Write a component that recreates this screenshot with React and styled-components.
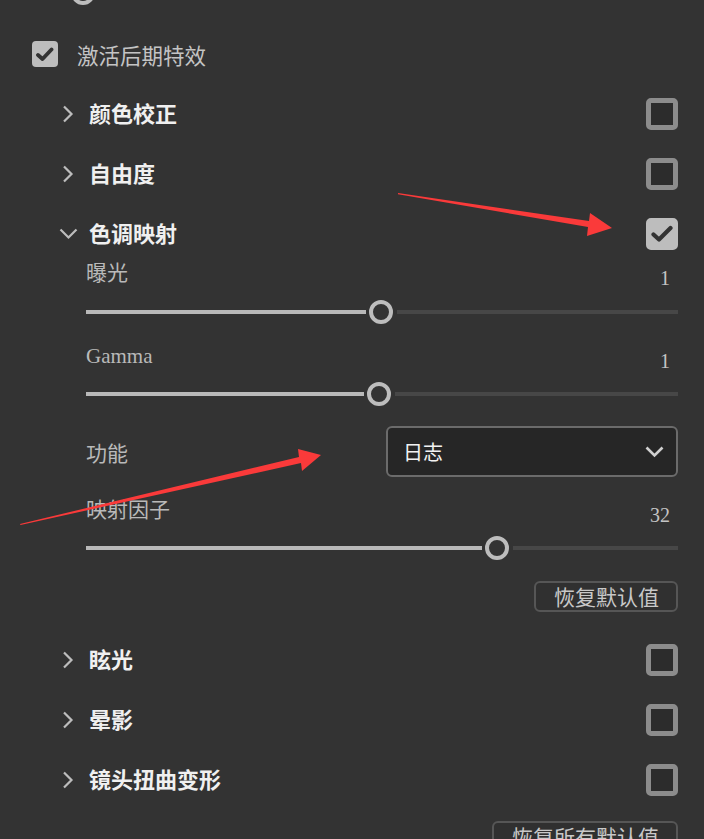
import React from 'react';
import styled, { createGlobalStyle } from 'styled-components';

const GlobalStyle = createGlobalStyle`
  html, body {
    margin: 0;
    background: #333333;
  }
  body {
    font-family: "Noto Sans CJK SC", "Noto Sans", sans-serif;
    overflow: hidden;
  }
`;

const Page = styled.div`
  position: relative;
  width: 704px;
  height: 839px;
  overflow: hidden;
  background: #333333;
`;

const TopSlider = styled.div`
  margin-top: -19px;
  padding: 0 26px 0 32px;
`;

const ActivateRow = styled.div`
  display: flex;
  align-items: center;
  gap: 19px;
  height: 60px;
  margin-top: 19px;
  padding-left: 32px;
  color: #c4c4c4;
  font-size: 21.5px;
`;

const SmallBox = styled.div`
  width: 26px;
  height: 26px;
  border-radius: 4px;
  background: #bdbdbd;
  display: flex;
  align-items: center;
  justify-content: center;
`;

const SectionRow = styled.div`
  display: flex;
  align-items: center;
  height: 60px;
  padding: 0 26px 0 ${p => (p.open ? 59 : 62)}px;
`;

const Chevron = styled.span`
  width: ${p => (p.open ? 30 : 27)}px;
  display: flex;
  align-items: center;
`;

const SectionTitle = styled.span`
  flex: 1;
  color: #f0f0f0;
  font-size: 22px;
  font-weight: 700;
  line-height: 26px;
  padding-bottom: 4px;
`;

const Box = styled.div`
  width: 32px;
  height: 32px;
  box-sizing: border-box;
  border-radius: 5px;
  border: 5px solid ${p => (p.checked ? '#bdbdbd' : '#8c8c8c')};
  background: ${p => (p.checked ? '#bdbdbd' : '#2c2c2c')};
  display: flex;
  align-items: center;
  justify-content: center;
`;

const SubPanel = styled.div`
  padding: 0 26px 0 86px;
  display: flex;
  flex-direction: column;
`;

const LabelRow = styled.div`
  display: flex;
  justify-content: space-between;
  align-items: flex-start;
  height: 24px;
  line-height: 24px;
  margin-top: ${p => p.mt}px;
`;

const Label = styled.span`
  color: #b9b9b9;
  font-size: 21px;
  font-family: "Liberation Serif", "Noto Sans CJK SC", serif;
`;

const Value = styled.span`
  color: #c4c4c4;
  font-size: 20px;
  font-family: "Liberation Serif", serif;
  margin-top: 5px;
  margin-right: 8px;
`;

const Track = styled.div`
  display: flex;
  align-items: center;
  height: 24px;
  margin-top: ${p => p.mt || 0}px;
`;

const ActiveBar = styled.div`
  height: 4px;
  background: #b9b9b9;
  flex: none;
`;

const InactiveBar = styled.div`
  height: 4px;
  flex: 1;
  background: #474747;
`;

const Thumb = styled.div`
  flex: none;
  width: 24px;
  height: 24px;
  box-sizing: border-box;
  border-radius: 50%;
  border: 4px solid #bdbdbd;
  margin: 0 4px 0 3px;
`;

const SelectRow = styled.div`
  display: flex;
  align-items: center;
  justify-content: space-between;
  margin-top: 20px;
`;

const Select = styled.div`
  width: 292px;
  height: 51px;
  box-sizing: border-box;
  border: 2px solid #6b6b6b;
  border-radius: 6px;
  background: #262626;
  display: flex;
  align-items: center;
  justify-content: space-between;
  padding: 0 12px 0 15px;
  color: #f2f2f2;
  font-size: 20px;
`;

const ButtonRow = styled.div`
  display: flex;
  justify-content: flex-end;
  margin-top: ${p => p.mt}px;
  padding-right: ${p => p.pr || 0}px;
`;

const Button = styled.div`
  height: 31px;
  box-sizing: border-box;
  border: 2px solid #565656;
  border-radius: 6px;
  background: #303030;
  color: #c8c8c8;
  font-size: 21px;
  line-height: 27px;
  padding: 0 17px 0 18px;
`;

const Spacer = styled.div`
  height: ${p => p.h}px;
`;

const Overlay = styled.svg`
  position: absolute;
  left: 0;
  top: 0;
  pointer-events: none;
`;

const Check = ({ big }) => (
  big ? (
    <svg width="22" height="18" viewBox="0 0 22 18">
      <path d="M2.5 9.5 L8 14.5 L19.5 3" fill="none" stroke="#333" strokeWidth="4.2" strokeLinecap="round" strokeLinejoin="round" />
    </svg>
  ) : (
    <svg width="18" height="15" viewBox="0 0 18 15">
      <path d="M2 8 L6.5 12 L15.5 2.5" fill="none" stroke="#333" strokeWidth="3.8" strokeLinecap="round" strokeLinejoin="round" />
    </svg>
  )
);

const ChevronRight = () => (
  <svg width="12" height="18" viewBox="0 0 12 18">
    <path d="M2 1.5 L9.5 9 L2 16.5" fill="none" stroke="#bdbdbd" strokeWidth="2.2" />
  </svg>
);

const ChevronDown = ({ color = '#bdbdbd', w = 2.2 }) => (
  <svg width="19" height="12" viewBox="0 0 19 12">
    <path d="M1.5 1.5 L9.5 9.5 L17.5 1.5" fill="none" stroke={color} strokeWidth={w} />
  </svg>
);

function Slider({ ratio, mt }) {
  return (
    <Track mt={mt}>
      <ActiveBar style={{ width: `${ratio * 100}%` }} />
      <Thumb />
      <InactiveBar />
    </Track>
  );
}

function Section({ title, checked, open }) {
  return (
    <SectionRow open={open}>
      <Chevron open={open}>{open ? <ChevronDown /> : <ChevronRight />}</Chevron>
      <SectionTitle>{title}</SectionTitle>
      <Box checked={checked}>{checked && <Check big />}</Box>
    </SectionRow>
  );
}

export default function App() {
  return (
    <Page>
      <GlobalStyle />
      <TopSlider>
        <Slider ratio={0.055} />
      </TopSlider>

      <ActivateRow>
        <SmallBox><Check /></SmallBox>
        激活后期特效
      </ActivateRow>

      <Section title="颜色校正" />
      <Section title="自由度" />
      <Section title="色调映射" checked open />

      <SubPanel>
        <LabelRow mt={-3}>
          <Label>曝光</Label>
          <Value>1</Value>
        </LabelRow>
        <Slider ratio={0.473} mt={15} />

        <LabelRow mt={20}>
          <Label>Gamma</Label>
          <Value>1</Value>
        </LabelRow>
        <Slider ratio={0.47} mt={14} />

        <SelectRow>
          <Label>功能</Label>
          <Select>
            日志
            <ChevronDown color="#d0d0d0" w={2.6} />
          </Select>
        </SelectRow>

        <LabelRow mt={21}>
          <Label>映射因子</Label>
          <Value>32</Value>
        </LabelRow>
        <Slider ratio={0.669} mt={14} />

        <ButtonRow mt={21}>
          <Button>恢复默认值</Button>
        </ButtonRow>
      </SubPanel>

      <Spacer h={18} />
      <Section title="眩光" />
      <Section title="晕影" />
      <Section title="镜头扭曲变形" />

      <ButtonRow mt={11} pr={26}>
        <Button>恢复所有默认值</Button>
      </ButtonRow>

      <Overlay width="704" height="839" viewBox="0 0 704 839">
        <polygon points="398,193 589,221 590,213 612,228 587,236 588,227 398,194.2" fill="#fa3a3a" />
        <polygon points="20,524 299,457 298,449 321,455 302,471 301,463 20.5,525" fill="#fa3a3a" />
      </Overlay>
    </Page>
  );
}
